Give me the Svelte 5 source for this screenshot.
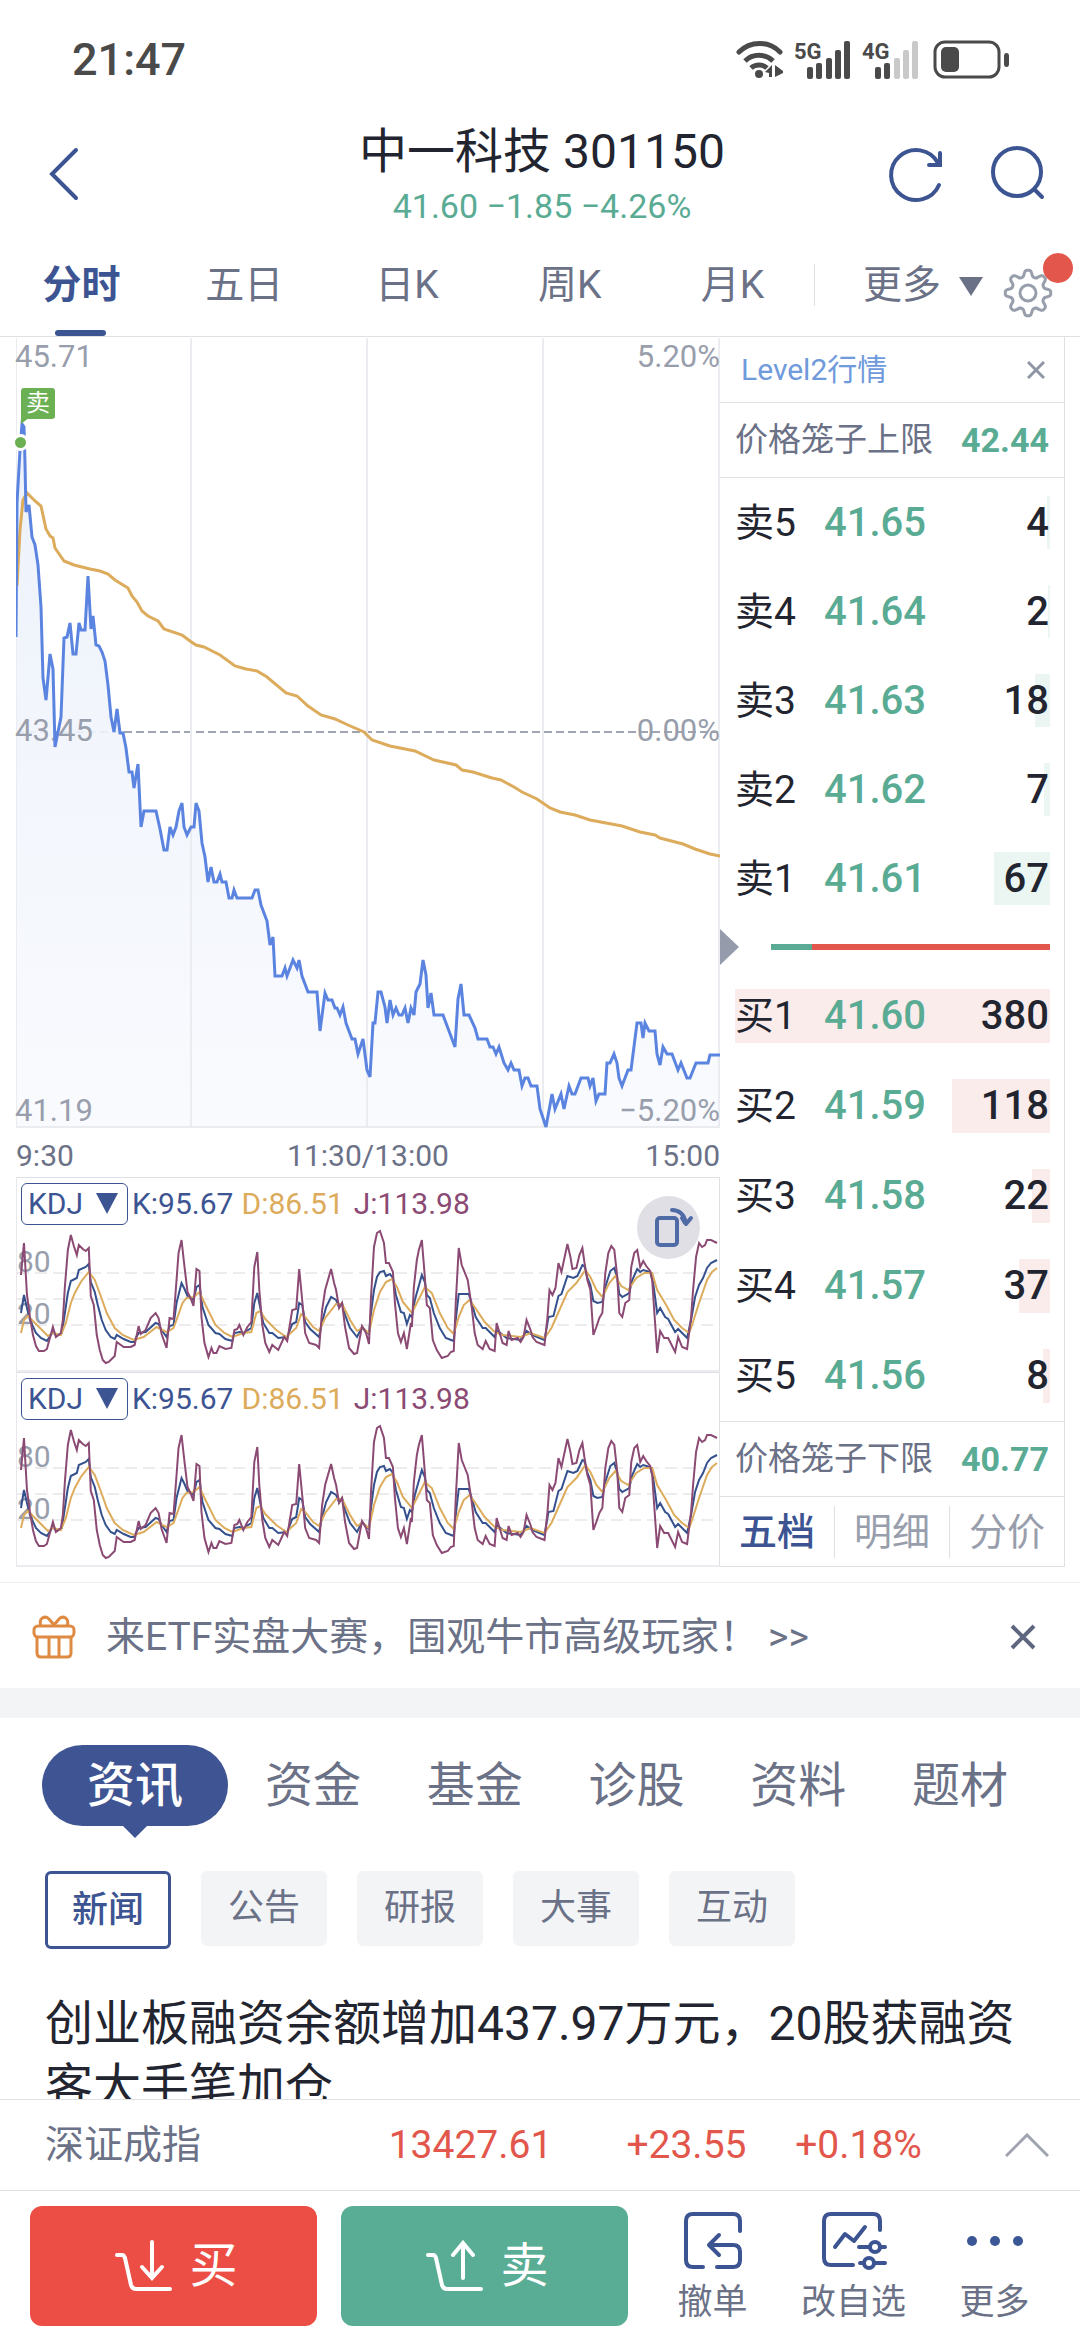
<script lang="ts">
	const periods = ['分时', '五日', '日K', '周K', '月K'];
	const sections = ['资讯', '资金', '基金', '诊股', '资料', '题材'];
	const feeds = ['新闻', '公告', '研报', '大事', '互动'];
	const bookViews = ['五档', '明细', '分价'];

	let period = $state('分时');
	let section = $state('资讯');
	let feed = $state('新闻');
	let bookView = $state('五档');

	const asks = [
		{ label: '卖5', price: '41.65', qty: 4 },
		{ label: '卖4', price: '41.64', qty: 2 },
		{ label: '卖3', price: '41.63', qty: 18 },
		{ label: '卖2', price: '41.62', qty: 7 },
		{ label: '卖1', price: '41.61', qty: 67 },
	];
	const bids = [
		{ label: '买1', price: '41.60', qty: 380 },
		{ label: '买2', price: '41.59', qty: 118 },
		{ label: '买3', price: '41.58', qty: 22 },
		{ label: '买4', price: '41.57', qty: 37 },
		{ label: '买5', price: '41.56', qty: 8 },
	];
	const maxQty = Math.max(...asks.map((r) => r.qty), ...bids.map((r) => r.qty));
	const askShare = 14.7;

	// chart space: 704 x 790, top = 45.71, bottom = 41.19
	const price =
		'0,299 1,165 4,112 6,86 8,89 9,125 10,174 13,167 16,199 19,207 22,227 25,269 27,340 30,362 34,316 37,331 39,409 45,379 48,300 51,299 54,285 57,316 60,316 63,285 65,292 69,292 72,238 75,291 77,278 80,307 83,308 86,314 89,323 92,347 95,379 98,394 101,371 104,395 107,395 110,410 ' +
		'113,434 116,434 118,450 122,426 125,489 128,473 140,473 144,491 148,512 151,512 154,489 157,497 160,489 163,473 166,465 168,489 171,497 175,489 178,489 180,465 183,473 186,505 189,519 192,544 195,529 198,544 201,544 204,536 206,544 210,544 213,560 216,560 218,552 221,560 236,560 239,552 242,552 245,567 251,583 254,607 257,599 259,638 266,638 269,630 271,638 277,622 281,630 283,622 286,638 292,654 301,654 304,693 309,655 312,662 316,662 319,670 321,670 324,677 327,669 330,685 336,701 339,701 342,716 347,701 351,732 354,739 ' +
		'357,685 359,685 362,654 365,654 369,669 371,685 374,662 377,677 380,670 383,677 386,677 389,670 392,685 395,670 398,677 400,654 404,646 407,622 410,637 412,670 415,655 418,677 427,677 439,709 442,661 445,646 448,677 453,677 459,690 462,701 471,701 474,709 477,709 480,716 483,709 488,725 492,732 495,725 498,732 503,732 506,748 509,740 512,740 515,748 521,748 524,771 530,789 536,756 539,771 545,756 548,771 553,748 556,756 559,756 565,740 572,740 574,748 577,740 580,763 583,756 589,756 591,725 594,725 598,716 601,725 603,740 606,748 612,732 615,732 621,685 625,685 627,700 629,685 633,693 639,693 641,716 644,727 647,709 651,716 656,716 662,732 665,725 671,740 674,740 680,725 692,725 694,717 704,717';
	const average =
		'1,248 4,192 7,162 11,155 19,163 25,168 30,191 34,198 37,200 39,210 48,223 58,227 74,231 84,233 92,236 99,242 112,250 116,258 121,264 126,273 132,278 142,283 148,291 166,297 174,303 180,307 188,309 204,317 219,328 230,331 241,333 251,339 270,355 281,358 292,368 305,377 319,381 332,387 348,394 356,402 374,408 399,413 418,422 440,427 446,432 457,434 476,440 485,442 498,449 506,454 521,461 534,470 544,474 559,477 574,482 606,488 624,494 639,497 644,500 667,506 679,511 694,516 704,518';

	// indicator space: 704 x 144
	const kLine =
		'4,87 7,69 10,82 13,94 19,107 24,112 30,115 36,106 40,110 45,107 48,87 51,67 54,55 60,52 62,44 69,41 72,38 74,56 78,66 81,79 85,94 89,104 94,111 98,113 100,109 107,113 114,116 117,116 122,107 129,106 139,97 142,98 145,104 150,111 153,100 157,99 160,77 165,57 168,63 171,70 177,74 180,61 183,59 186,81 192,99 199,107 203,108 209,113 216,115 218,107 223,106 227,107 235,102 238,77 241,67 244,82 247,97 253,107 256,107 262,112 271,111 276,98 280,96 283,77 286,79 289,96 294,103 303,111 306,96 310,81 315,71 320,74 323,81 326,77 329,89 334,102 341,111 346,101 ' +
		'353,108 355,87 358,64 361,51 364,46 368,45 370,50 374,48 377,52 380,69 385,86 388,87 391,98 394,89 396,91 399,74 406,49 409,56 411,69 414,72 418,87 424,102 430,112 438,115 440,94 443,68 453,68 456,77 460,91 467,102 470,102 479,111 481,104 491,112 505,114 511,105 517,109 529,114 533,91 538,90 543,70 546,68 552,50 558,52 562,50 567,39 569,40 572,52 575,59 578,75 582,77 587,76 590,61 595,45 599,42 602,52 604,68 607,71 614,67 617,54 622,43 625,46 628,44 635,46 638,57 642,87 645,82 650,91 653,93 660,106 663,103 672,112 676,94 680,71 684,59 688,52 692,42 696,37 702,34';
	const dLine =
		'4,107 7,94 11,90 17,96 24,103 31,110 36,107 44,109 49,97 54,77 58,67 64,56 72,46 78,54 84,70 90,87 98,102 106,109 117,114 127,111 140,101 150,106 157,102 161,91 166,77 170,72 177,71 183,66 189,79 199,99 208,107 216,111 227,107 235,106 240,87 244,85 249,93 260,104 270,111 280,102 285,88 289,91 297,101 303,105 309,92 320,78 326,78 334,94 341,105 346,102 ' +
		'353,107 358,84 364,66 370,56 376,53 381,61 387,76 396,87 401,77 409,61 416,67 424,87 432,102 438,108 443,91 448,79 454,74 461,84 469,96 479,106 487,109 505,111 515,107 529,112 536,102 544,84 552,66 561,57 570,44 575,51 581,64 587,71 594,57 600,50 606,60 613,64 621,52 629,47 637,47 642,64 651,79 659,94 667,102 674,107 677,99 684,77 692,54 697,46 702,42';
	const jLine =
		'4,49 7,17 10,69 13,91 16,109 19,120 22,125 27,125 30,123 36,101 39,111 44,107 46,94 48,61 51,24 54,9 57,20 60,29 62,19 66,23 69,25 72,22 74,70 77,79 80,109 83,124 86,134 89,137 92,136 98,130 100,116 107,121 114,121 118,119 122,100 124,108 129,104 134,92 139,87 142,92 145,108 150,122 153,92 157,93 160,54 162,27 165,14 168,41 171,66 174,72 177,80 180,43 183,45 185,91 188,117 192,131 195,122 197,127 200,127 203,120 209,123 215,122 218,104 221,103 223,99 227,109 231,101 235,96 238,41 241,26 243,64 246,99 249,117 253,126 256,119 262,124 268,111 271,115 276,84 280,83 283,43 286,74 289,107 293,117 300,119 303,122 306,84 309,64 315,43 318,57 320,64 323,82 326,77 329,101 333,122 338,128 341,127 346,100 350,107 ' +
		'353,118 355,71 358,21 361,7 364,5 368,17 370,37 373,37 377,46 379,77 382,107 385,116 388,107 391,123 395,97 396,101 398,61 401,34 403,24 406,14 409,51 411,79 414,82 417,114 421,124 426,132 432,130 435,126 438,125 440,77 443,22 446,39 452,54 456,81 459,107 462,119 467,123 470,115 474,123 479,125 481,97 484,107 487,117 491,119 493,105 496,114 502,112 505,116 508,111 511,94 515,104 517,111 521,116 529,119 532,91 534,64 537,69 540,62 543,37 546,46 552,18 555,31 557,43 561,42 564,29 567,22 569,36 572,54 575,64 578,109 581,101 584,92 587,87 590,47 593,27 596,20 599,24 602,51 604,87 607,91 610,77 614,74 616,41 619,27 622,24 625,41 628,35 631,40 635,45 637,54 639,84 642,127 645,105 649,112 653,112 660,126 663,111 667,121 672,123 676,91 678,64 681,31 684,17 687,21 690,19 692,14 696,14 702,17';

	function gearPath(cx: number, cy: number) {
		const pts: string[] = [];
		for (let i = 0; i < 96; i++) {
			const a = (i / 96) * Math.PI * 2;
			const bump = Math.max(-1, Math.min(1, 1.5 * Math.cos(8 * a)));
			const r = 19.7 + 3 * bump;
			pts.push(`${(cx + r * Math.sin(a)).toFixed(1)} ${(cy - r * Math.cos(a)).toFixed(1)}`);
		}
		return `M${pts.join('L')}Z`;
	}
</script>

{#snippet bookRows(rows: { label: string; price: string; qty: number }[], side: string)}
	<table class="book-rows {side}">
		<tbody>
			{#each rows as row}
				<tr>
					<td class="label">{row.label}</td>
					<td class="price">{row.price}</td>
					<td class="qty">
						<span class="depth" style:width="{(row.qty / maxQty) * 100}%"></span>
						<span class="qty-value">{row.qty}</span>
					</td>
				</tr>
			{/each}
		</tbody>
	</table>
{/snippet}

{#snippet kdjPanel(id: string)}
	<div class="kdj">
		<div class="kdj-head">
			<span class="kdj-picker">
				<select {id} aria-label="指标">
					<option>KDJ</option>
				</select>
				<svg class="caret" viewBox="0 0 22 21" aria-hidden="true"><path d="M0 0H22L11 21Z" /></svg>
			</span>
			<span class="k">K:95.67</span>
			<span class="d">D:86.51</span>
			<span class="j">J:113.98</span>
		</div>
		<div class="kdj-plot">
			<span class="axis level-80">80</span>
			<span class="axis level-20">20</span>
			<svg viewBox="0 0 704 144" preserveAspectRatio="none" aria-hidden="true">
				<path class="guide" d="M0 47H704M0 73H704M0 99H704" />
				<polyline class="line-k" points={kLine} />
				<polyline class="line-d" points={dLine} />
				<polyline class="line-j" points={jLine} />
			</svg>
		</div>
	</div>
{/snippet}

<div class="app">
	<header>
		<div class="status">
			<span class="clock">21:47</span>
			<div class="status-icons">
				<svg width="48" height="52" viewBox="0 -6 48 52" fill="none" stroke="#4a4a4a" stroke-width="5">
					<path d="M3 12A29 29 0 0 1 44 12" stroke-linecap="round" />
					<path d="M9 21A20 20 0 0 1 37 21" />
					<path d="M15 28A12 12 0 0 1 31 28" />
					<circle cx="23" cy="34" r="4" fill="#4a4a4a" stroke="none" />
					<path d="M29 32L36 25V37H33V33ZM39 25L47 31V33L39 37Z" fill="#4a4a4a" stroke="none" />
				</svg>
				<svg width="58" height="52" viewBox="0 -6 58 52" fill="#4a4a4a">
					<text x="0" y="19" class="net">5G</text>
					<rect x="13" y="27" width="6" height="12" rx="2" />
					<rect x="22" y="23" width="6" height="16" rx="2" />
					<rect x="32" y="18" width="6" height="21" rx="2" />
					<rect x="41" y="10" width="6" height="29" rx="2" />
					<rect x="50" y="1" width="6" height="38" rx="2" />
				</svg>
				<svg width="58" height="52" viewBox="0 -6 58 52" fill="#4a4a4a">
					<text x="0" y="19" class="net">4G</text>
					<rect x="13" y="27" width="6" height="12" rx="2" />
					<rect x="22" y="23" width="6" height="16" rx="2" />
					<g fill="#c9c9c9">
						<rect x="32" y="18" width="6" height="21" rx="2" />
						<rect x="41" y="10" width="6" height="29" rx="2" />
						<rect x="50" y="1" width="6" height="38" rx="2" />
					</g>
				</svg>
				<svg width="80" height="52" viewBox="-2 -6 80 52" fill="#4a4a4a">
					<rect x="3" y="2" width="64" height="35" rx="10" fill="none" stroke="#4a4a4a" stroke-width="3" />
					<rect x="9" y="7" width="18" height="25" rx="5" />
					<rect x="72" y="13" width="5" height="14" rx="3" />
				</svg>
			</div>
		</div>

		<div class="title-bar">
			<button class="icon-btn" aria-label="返回">
				<svg width="56" height="60" viewBox="0 0 56 60" class="navy-line"><path d="M40 4L16 28L40 52" /></svg>
			</button>
			<div class="title">
				<h1>中一科技 301150</h1>
				<p>41.60 −1.85 −4.26%</p>
			</div>
			<div class="title-actions">
				<button class="icon-btn" aria-label="刷新">
					<svg width="60" height="60" viewBox="0 0 60 60" class="navy-line">
						<path d="M53 39A25 25 0 1 1 52 17" />
						<path d="M54 7V19H43" stroke-linejoin="miter" />
					</svg>
				</button>
				<button class="icon-btn" aria-label="搜索">
					<svg width="60" height="60" viewBox="0 0 60 60" class="navy-line">
						<circle cx="29" cy="26" r="24" />
						<path d="M47 44L54 51" />
					</svg>
				</button>
			</div>
		</div>

		<nav class="periods">
			<div class="period-tabs">
				{#each periods as p}
					<button class="period" class:active={period === p} onclick={() => (period = p)}>{p}</button>
				{/each}
			</div>
			<div class="period-more">
				<button class="more-btn">
					更多
					<svg width="24" height="24" viewBox="0 0 24 24"><path d="M0 4H24L12 23Z" fill="#6b7186" /></svg>
				</button>
				<button class="settings" aria-label="设置">
					<svg width="50" height="50" viewBox="0 0 50 50" fill="none" stroke="#989eac" stroke-width="3" stroke-linejoin="round">
						<path d={gearPath(25, 25)} />
						<circle cx="25" cy="25" r="8" />
					</svg>
					<span class="dot"></span>
				</button>
			</div>
		</nav>
	</header>

	<main>
		<section class="quote">
			<div class="charts">
				<div class="chart">
					<svg viewBox="0 0 704 790" preserveAspectRatio="none" aria-hidden="true">
						<defs>
							<linearGradient id="fill" x1="0" y1="0" x2="0" y2="1">
								<stop offset="0" stop-color="#ebf0fa" />
								<stop offset="1" stop-color="#f8fafe" />
							</linearGradient>
						</defs>
						<path class="base" d="M0 394H704" />
						<polygon points="0,790 {price} 704,790" fill="url(#fill)" fill-opacity="0.9" />
						<path class="grid" d="M0 0V790M175 0V790M351 0V790M527 0V790M703 0V790M0 789H704" />
					</svg>
					<span class="axis top left">45.71</span>
					<span class="axis top right">5.20%</span>
					<span class="axis mid left">43.45</span>
					<span class="axis mid right">0.00%</span>
					<span class="axis bottom left">41.19</span>
					<span class="axis bottom right">−5.20%</span>
					<svg viewBox="0 0 704 790" preserveAspectRatio="none" aria-hidden="true">
						<polyline class="line-avg" points={average} />
						<polyline class="line-price" points={price} />
					</svg>
					<span class="trade-dot"></span>
					<span class="trade-tag">卖</span>
				</div>
				<div class="times">
					<span>9:30</span>
					<span>11:30/13:00</span>
					<span>15:00</span>
				</div>
				{@render kdjPanel('indicator-1')}
				{@render kdjPanel('indicator-2')}
				<button class="rotate" aria-label="横屏">
					<svg width="63" height="63" viewBox="0 0 63 63" fill="none" stroke="#4f6ba5" stroke-width="4" stroke-linecap="round" stroke-linejoin="round">
						<rect x="20" y="22" width="20" height="27" rx="3" />
						<path d="M35 14C42 14 47 18 49 27M49 28L54 22M48 27L45 22" />
					</svg>
				</button>
			</div>

			<aside class="book">
				<div class="book-head">
					<a href="#level2">Level2行情</a>
					<button class="icon-btn" aria-label="关闭">
						<svg width="18" height="18" viewBox="0 0 18 18" fill="none" stroke="#9096a6" stroke-width="3"><path d="M1 1L17 17M17 1L1 17" /></svg>
					</button>
				</div>
				<div class="limit upper"><span>价格笼子上限</span><b>42.44</b></div>
				{@render bookRows(asks, 'asks')}
				<div class="ratio">
					<svg width="19" height="36" viewBox="0 0 19 36"><path d="M0 0L19 18L0 36Z" fill="#959bab" /></svg>
					<div class="ratio-bar"><span style:width="{askShare}%"></span></div>
				</div>
				{@render bookRows(bids, 'bids')}
				<div class="limit lower"><span>价格笼子下限</span><b>40.77</b></div>
				<div class="book-tabs">
					{#each bookViews as v}
						<button class:active={bookView === v} onclick={() => (bookView = v)}>{v}</button>
					{/each}
				</div>
			</aside>
		</section>

		<div class="promo">
			<svg width="44" height="44" viewBox="0 0 44 44" fill="none" stroke="#df8a43" stroke-width="3" stroke-linejoin="round">
				<rect x="2" y="11" width="40" height="11" rx="4" />
				<path d="M5 22V38Q5 42 9 42H35Q39 42 39 38V22M17 22V42M27 22V42" />
				<path d="M9 11C6 3 13 0 17 4L22 10L27 4C31 0 38 3 35 11" />
			</svg>
			<a href="#promo">来ETF实盘大赛，围观牛市高级玩家！ &gt;&gt;</a>
			<button class="icon-btn" aria-label="关闭">
				<svg width="26" height="26" viewBox="0 0 26 26" fill="none" stroke="#5f6780" stroke-width="4"><path d="M2 2L24 24M24 2L2 24" /></svg>
			</button>
		</div>

		<section class="info">
			<nav class="sections">
				{#each sections as s}
					<button class:active={section === s} onclick={() => (section = s)}>{s}</button>
				{/each}
			</nav>
			<div class="feeds">
				{#each feeds as f}
					<button class:active={feed === f} onclick={() => (feed = f)}>{f}</button>
				{/each}
			</div>
			<a class="news" href="#news">创业板融资余额增加437.97万元，20股获融资客大手笔加仓</a>
		</section>
	</main>

	<footer>
		<div class="index">
			<span class="index-name">深证成指</span>
			<span>13427.61</span>
			<span>+23.55</span>
			<span>+0.18%</span>
			<button class="icon-btn" aria-label="展开">
				<svg width="44" height="24" viewBox="0 0 44 24" fill="none" stroke="#a0a4b0" stroke-width="3"><path d="M1 23L22 2L43 23" /></svg>
			</button>
		</div>
		<div class="actions">
			<div class="trade">
				<button class="buy">
					<svg width="58" height="52" viewBox="0 0 58 52" class="cart">
						<path d="M2 15H7Q9 15 10 18L16 45Q17 49 21 49H55" />
						<path d="M37 2V36M27 27L37 38L47 27" />
					</svg>
					买
				</button>
				<button class="sell">
					<svg width="58" height="52" viewBox="0 0 58 52" class="cart">
						<path d="M2 15H7Q9 15 10 18L16 45Q17 49 21 49H55" />
						<path d="M37 38V4M27 15L37 3L47 15" />
					</svg>
					卖
				</button>
			</div>
			<div class="tools">
				<button>
					<svg width="60" height="60" viewBox="0 0 60 60" class="tool-line">
						<path d="M20 56H10Q3 56 3 49V10Q3 3 10 3H50Q57 3 57 10V20" />
						<path d="M34 56H50Q57 56 57 49V41Q57 34 50 34H26M36 24L26 34L36 44" />
					</svg>
					撤单
				</button>
				<button>
					<svg width="66" height="60" viewBox="0 0 66 60" class="tool-line">
						<path d="M32 54H10Q3 54 3 47V10Q3 3 10 3H52Q59 3 59 10V19" />
						<path d="M14 36L24 23L33 30L44 16" />
						<circle cx="54" cy="36" r="5" />
						<circle cx="48" cy="52" r="5" />
						<path d="M38 36H49M59 36H64M53 52H64M39 52H43" />
					</svg>
					改自选
				</button>
				<button>
					<svg width="60" height="60" viewBox="0 0 60 60" fill="#3c5796">
						<circle cx="7" cy="30" r="5" />
						<circle cx="30" cy="30" r="5" />
						<circle cx="53" cy="30" r="5" />
					</svg>
					更多
				</button>
			</div>
		</div>
	</footer>
</div>

<style>
	:global(body) {
		background: #fff;
	}

	.app {
		--navy: #3c5492;
		--green: #5aab94;
		--red: #e2564b;
		--ink: #22252f;
		--slate: #6b7186;
		--mute: #989eac;
		--line: #dfe0e3;
		display: flex;
		flex-direction: column;
		height: 100vh;
		font-family: Roboto, 'Noto Sans CJK SC', sans-serif;
		line-height: 1.25;
		color: var(--ink);
	}

	button {
		font: inherit;
		color: inherit;
		background: none;
		border: 0;
		padding: 0;
		cursor: pointer;
	}

	a {
		color: inherit;
		text-decoration: none;
	}

	svg {
		display: block;
	}

	.icon-btn {
		display: flex;
	}

	.navy-line {
		fill: none;
		stroke: var(--navy);
		stroke-width: 4;
		stroke-linecap: round;
	}

	/* status + title */
	.status {
		display: flex;
		align-items: center;
		justify-content: space-between;
		height: 120px;
		padding: 0 70px 0 72px;
	}

	.clock {
		font-size: 45px;
		font-weight: 500;
		color: #4a4a4a;
	}

	.status-icons {
		display: flex;
		gap: 10px;
	}

	.net {
		font-size: 22px;
		font-weight: 700;
	}

	.title-bar {
		display: grid;
		grid-template-columns: 1fr auto 1fr;
		align-items: center;
		height: 112px;
		padding: 0 32px 0 36px;
	}

	.title {
		display: flex;
		flex-direction: column;
		gap: 4px;
		text-align: center;
	}

	h1 {
		margin: 0;
		font-size: 48px;
		font-weight: 400;
		line-height: 56px;
	}

	.title p {
		margin: 0;
		font-size: 34px;
		line-height: 44px;
		color: var(--green);
	}

	.title-actions {
		display: flex;
		justify-content: flex-end;
		gap: 42px;
	}

	.periods {
		display: flex;
		height: 104px;
		border-bottom: 1px solid var(--line);
		font-size: 39px;
		color: var(--slate);
	}

	.period-tabs {
		display: flex;
		flex: 1;
	}

	.period {
		position: relative;
		flex: 1;
		padding-top: 2px;
	}

	.period.active {
		color: var(--navy);
		font-weight: 700;
	}

	.period.active::after {
		content: '';
		position: absolute;
		left: 50%;
		bottom: 0;
		width: 51px;
		height: 6px;
		margin-left: -26px;
		border-radius: 3px;
		background: var(--navy);
	}

	.period-more {
		display: flex;
		align-items: center;
		gap: 20px;
		padding: 2px 27px 0 0;
	}

	.period-more::before {
		content: '';
		width: 1px;
		height: 42px;
		margin-right: 28px;
		background: var(--line);
	}

	.more-btn {
		display: flex;
		align-items: center;
		gap: 18px;
	}

	.settings {
		position: relative;
		padding-top: 15px;
	}

	.dot {
		position: absolute;
		top: 0;
		right: -20px;
		width: 30px;
		height: 30px;
		border-radius: 50%;
		background: var(--red);
	}

	/* quote area */
	main {
		flex: 1;
		min-height: 0;
		overflow: hidden;
	}

	.quote {
		display: grid;
		grid-template-columns: minmax(0, 1fr) 345px;
		padding: 0 15px 0 16px;
	}

	.charts {
		position: relative;
		font-size: 30px;
		line-height: 36px;
	}

	.chart {
		position: relative;
		height: 791px;
		padding-top: 1px;
		font-size: 31px;
	}

	.chart svg {
		position: absolute;
		width: 100%;
		height: 790px;
	}

	.chart polyline,
	.chart path,
	.kdj-plot polyline,
	.kdj-plot path {
		fill: none;
		vector-effect: non-scaling-stroke;
	}

	.grid {
		stroke: #ebecf0;
		stroke-width: 2;
	}

	.base {
		stroke: #a0a5b2;
		stroke-width: 2;
		stroke-dasharray: 8 4;
	}

	.line-price {
		stroke: #5b84e0;
		stroke-width: 3;
	}

	.line-avg {
		stroke: #dcab5c;
		stroke-width: 3;
	}

	.axis {
		position: absolute;
		color: var(--mute);
	}

	.axis.left {
		left: -1px;
	}

	.axis.right {
		right: 0;
	}

	.axis.top {
		top: 2px;
	}

	.axis.mid {
		top: 376px;
	}

	.axis.bottom {
		bottom: 0;
	}

	.trade-dot {
		position: absolute;
		left: -4px;
		top: 97px;
		width: 11px;
		height: 11px;
		border: 3px solid #fff;
		border-radius: 50%;
		background: #6bb154;
	}

	.trade-tag {
		position: absolute;
		left: 5px;
		top: 51px;
		width: 34px;
		height: 31px;
		border-radius: 3px;
		background: #6bb154;
		color: #fff;
		font-size: 24px;
		line-height: 31px;
		text-align: center;
	}

	.trade-tag::after {
		content: '';
		position: absolute;
		left: 0;
		top: 29px;
		border-top: 7px solid #6bb154;
		border-right: 9px solid transparent;
	}

	.times {
		display: grid;
		grid-template-columns: 1fr auto 1fr;
		align-items: center;
		height: 48px;
		padding-top: 6px;
		box-sizing: border-box;
		color: var(--slate);
	}

	.times span:last-child {
		text-align: right;
	}

	.kdj {
		border: 1px solid var(--line);
		border-left-color: #e8e8ec;
		border-bottom: 2px solid #ebecf0;
	}

	.kdj-head {
		display: flex;
		align-items: center;
		height: 48px;
		box-sizing: border-box;
		gap: 8px;
		padding: 4px 0 0 4px;
		white-space: nowrap;
	}

	.kdj-picker {
		position: relative;
		margin-right: -4px;
	}

	.kdj-picker select {
		display: block;
		appearance: none;
		width: 107px;
		height: 42px;
		padding: 0 6px;
		border: 1px solid var(--navy);
		border-radius: 6px;
		background: #fff;
		font: inherit;
		color: var(--navy);
	}

	.caret {
		position: absolute;
		right: 10px;
		top: 10px;
		width: 22px;
		height: 21px;
		fill: var(--navy);
		pointer-events: none;
	}

	.k {
		color: var(--navy);
	}

	.d {
		color: #dcab5c;
	}

	.j {
		margin-left: 2px;
		color: #8b4a73;
	}

	.kdj-plot {
		position: relative;
		height: 144px;
	}

	.kdj-plot svg {
		position: relative;
		width: 100%;
		height: 144px;
	}

	.level-80 {
		top: 18px;
	}

	.level-20 {
		top: 70px;
	}

	.guide {
		stroke: #ececef;
		stroke-width: 2;
		stroke-dasharray: 12 6;
	}

	.line-k,
	.line-d,
	.line-j {
		stroke-width: 2;
	}

	.line-k {
		stroke: #34518e;
	}

	.line-d {
		stroke: #dcab5c;
	}

	.line-j {
		stroke: #8b4a73;
	}

	.rotate {
		position: absolute;
		right: 20px;
		bottom: 308px;
		border-radius: 50%;
		background: #e0dfe6;
	}

	/* order book */
	.book {
		display: flex;
		flex-direction: column;
		border: solid var(--line);
		border-width: 0 1px 1px 0;
	}

	.book-head {
		display: flex;
		align-items: center;
		justify-content: space-between;
		height: 65px;
		padding: 0 19px 0 21px;
		border-bottom: 1px solid var(--line);
		font-size: 30px;
		color: #6f9adb;
	}

	.limit {
		display: flex;
		align-items: center;
		justify-content: space-between;
		height: 74px;
		padding: 0 15px;
		border-bottom: 1px solid var(--line);
		font-size: 33px;
		color: var(--slate);
	}

	.limit.lower {
		border-top: 1px solid var(--line);
	}

	.limit b {
		font-size: 34px;
		color: var(--green);
	}

	.book-rows,
	.book-rows tbody {
		display: block;
	}

	.book-rows tr {
		position: relative;
		display: flex;
		align-items: center;
		height: 89px;
		margin: 0 14px 0 15px;
	}

	.book-rows.bids tr {
		height: 90px;
	}

	.book-rows td {
		padding: 0;
		font-size: 40px;
		font-weight: 500;
		line-height: 50px;
	}

	.book-rows .label {
		width: 89px;
		font-size: 39px;
		font-weight: 400;
	}

	.book-rows .price {
		flex: 1;
		color: var(--green);
	}

	.label,
	.price,
	.qty-value {
		position: relative;
		z-index: 1;
	}

	.book-rows .qty {
		padding-right: 1px;
	}

	.depth {
		position: absolute;
		right: 0;
		top: 18px;
		bottom: 18px;
		background: #ebf5f2;
	}

	.bids .depth {
		background: #fbecec;
	}

	.ratio {
		display: flex;
		align-items: center;
		gap: 32px;
		height: 48px;
		padding-right: 14px;
	}

	.ratio-bar {
		flex: 1;
		height: 6px;
		background: var(--red);
	}

	.ratio-bar span {
		display: block;
		height: 6px;
		background: var(--green);
	}

	.book-tabs {
		display: flex;
		align-items: center;
		flex: 1;
	}

	.book-tabs button {
		flex: 1;
		height: 52px;
		font-size: 38px;
		line-height: 52px;
		color: var(--mute);
	}

	.book-tabs button + button {
		border-left: 1px solid var(--line);
	}

	.book-tabs .active {
		color: var(--navy);
		font-weight: 500;
	}

	/* promo */
	.promo {
		display: flex;
		align-items: center;
		gap: 30px;
		height: 102px;
		margin-top: 15px;
		padding: 3px 44px 0 32px;
		border-top: 1px solid #eff0f2;
		border-bottom: 30px solid #f3f4f6;
		font-size: 39px;
		color: var(--slate);
	}

	.promo a {
		flex: 1;
	}

	/* info */
	.sections {
		display: flex;
		padding: 27px 39px 0 42px;
		font-size: 48px;
		color: var(--slate);
	}

	.sections button {
		flex: 1;
		height: 81px;
		line-height: 81px;
	}

	.sections .active {
		position: relative;
		flex: 0 0 186px;
		margin-right: 4px;
		border-radius: 41px;
		background: #3f5593;
		color: #fff;
		font-weight: 500;
	}

	.sections .active::after {
		content: '';
		position: absolute;
		left: 50%;
		top: 100%;
		margin-left: -12px;
		border: 12px solid transparent;
		border-top-color: #3f5593;
		border-bottom: 0;
	}

	.feeds {
		display: flex;
		align-items: flex-start;
		gap: 30px;
		padding: 45px 45px 0;
	}

	.feeds button {
		width: 126px;
		height: 75px;
		border-radius: 6px;
		background: #f3f4f6;
		font-size: 36px;
		color: var(--slate);
	}

	.feeds .active {
		height: 78px;
		border: 3px solid var(--navy);
		background: #fff;
		color: var(--navy);
		font-weight: 500;
	}

	.news {
		display: block;
		margin: 43px 45px 0;
		font-size: 48px;
		line-height: 63px;
	}

	/* footer */
	footer {
		background: #fff;
	}

	.index {
		display: grid;
		grid-template-columns: 344fr 238fr 169fr 210fr auto;
		align-items: center;
		height: 90px;
		padding: 0 31px 0 45px;
		border: solid var(--line);
		border-width: 1px 0;
		font-size: 39px;
		color: var(--red);
	}

	.index-name {
		color: var(--slate);
	}

	.actions {
		display: flex;
		gap: 14px;
		padding: 15px 15px 14px 30px;
	}

	.trade {
		display: flex;
		flex: 1;
		gap: 24px;
	}

	.trade button {
		display: flex;
		align-items: center;
		justify-content: center;
		flex: 1;
		gap: 16px;
		height: 120px;
		padding-left: 6px;
		border-radius: 12px;
		font-size: 48px;
		color: #fff;
	}

	.buy {
		background: #ec4e45;
	}

	.sell {
		background: #5aad95;
	}

	.cart {
		fill: none;
		stroke: #fff;
		stroke-width: 4;
		stroke-linecap: round;
	}

	.tools {
		display: flex;
	}

	.tools button {
		display: flex;
		flex-direction: column;
		align-items: center;
		gap: 10px;
		width: 141px;
		padding-top: 5px;
		font-size: 35px;
		line-height: 44px;
		color: var(--slate);
	}

	.tool-line {
		fill: none;
		stroke: var(--navy);
		stroke-width: 4;
		stroke-linecap: round;
		stroke-linejoin: round;
	}
</style>
